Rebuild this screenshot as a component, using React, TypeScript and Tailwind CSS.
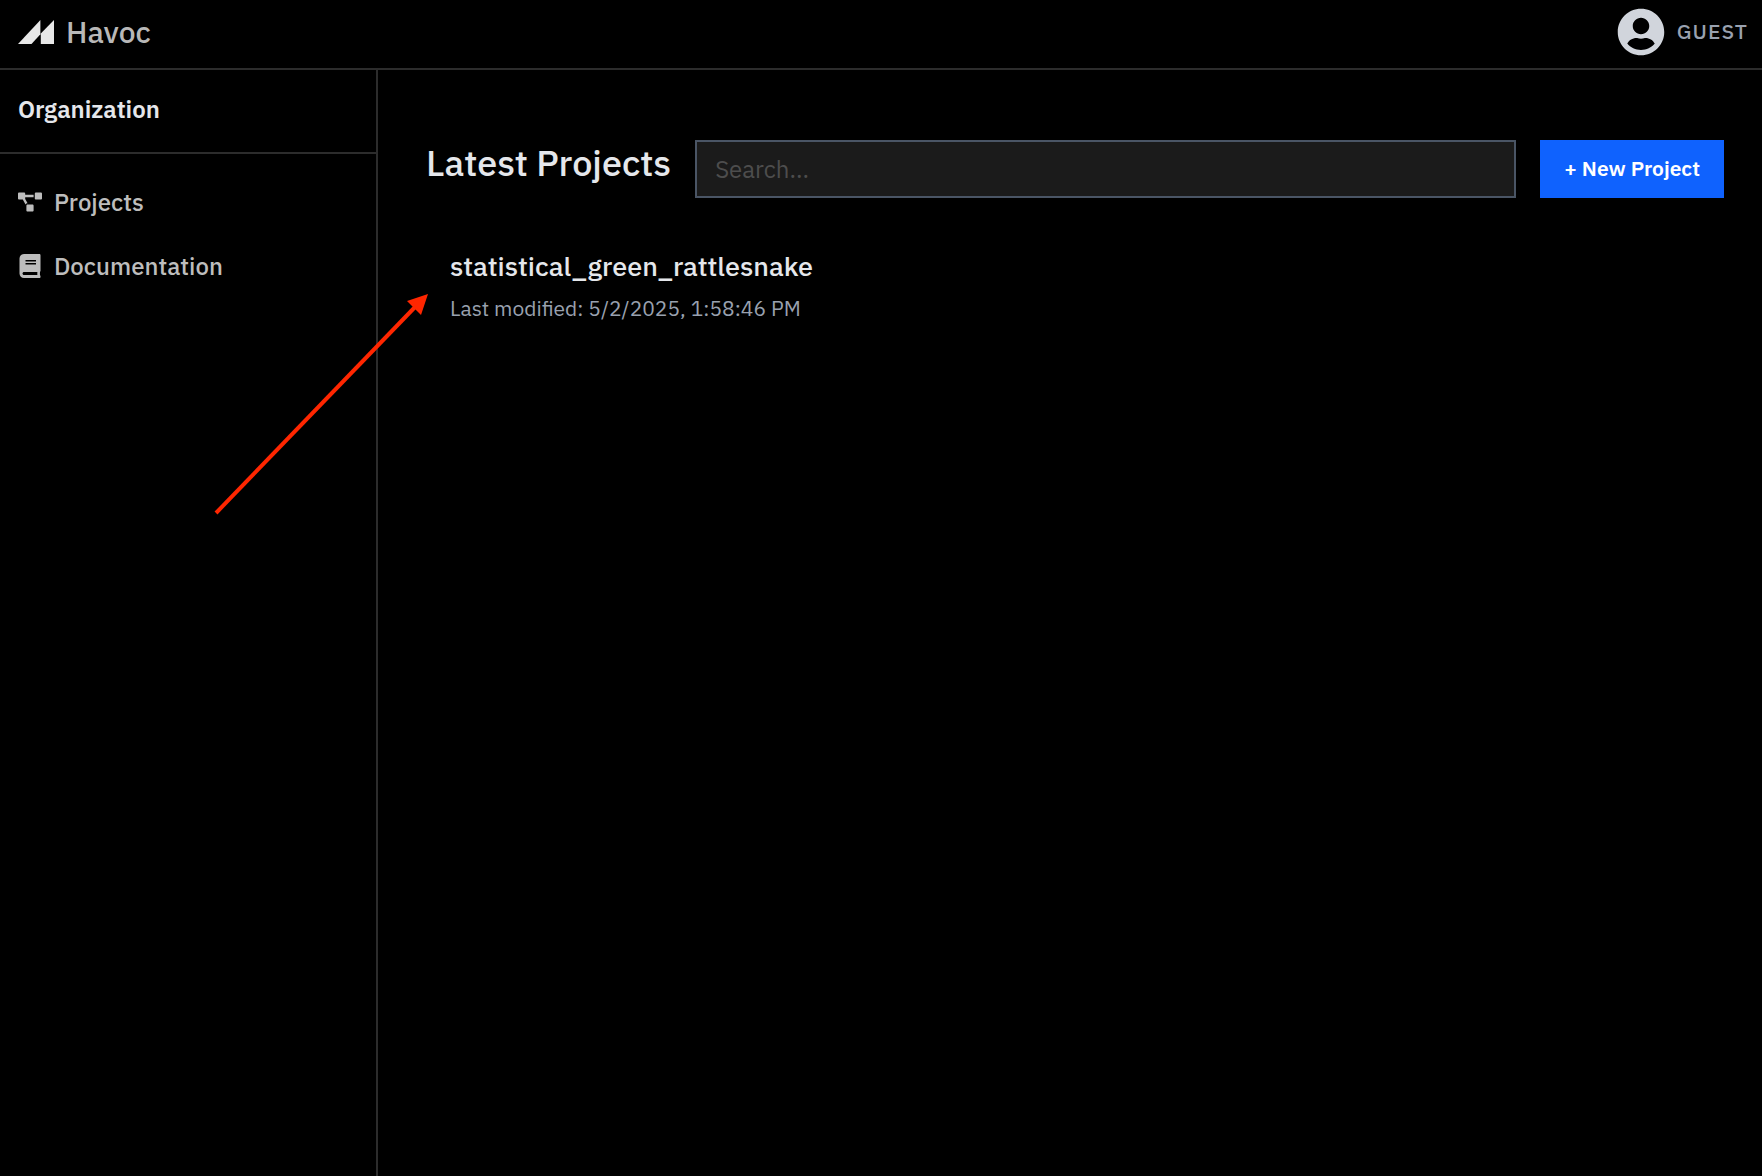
import { FaBook, FaProjectDiagram, FaUserCircle } from 'react-icons/fa';

const navItems = [
  { label: 'Projects', icon: FaProjectDiagram },
  { label: 'Documentation', icon: FaBook },
];

const projects = [
  { name: 'statistical_green_rattlesnake', modified: '5/2/2025, 1:58:46 PM' },
];

function Logo() {
  return (
    <svg viewBox="0 0 36 24" className="h-6 w-9" fill="#e8e8e8" aria-hidden="true">
      <path d="M0 24 22.4 0V14.2L13.5 24Z" />
      <path d="M22.8 13.6 36 0V24H22.8Z" />
    </svg>
  );
}

function Header() {
  return (
    <header className="flex h-[70px] items-center justify-between border-b-2 border-[#2c2c2c] pr-3.5 pb-1 pl-[18px]">
      <a href="#" className="flex items-center gap-3 text-[30px] leading-9 font-medium text-[#b8b8b8]">
        <Logo />
        Havoc
      </a>
      <button type="button" className="flex items-center gap-3 text-[21px] font-medium tracking-wider text-gray-400">
        <FaUserCircle className="size-12 text-gray-300" />
        GUEST
      </button>
    </header>
  );
}

function Sidebar() {
  return (
    <aside className="w-[378px] shrink-0 border-r-2 border-[#2c2c2c]">
      <h2 className="flex h-[84px] items-center border-b-2 border-[#2c2c2c] px-[18px] pb-1 text-2xl font-semibold text-gray-200">
        Organization
      </h2>
      <nav className="flex flex-col gap-7 px-[18px] py-[30px]">
        {navItems.map(({ label, icon: Icon }) => (
          <a key={label} href="#" className="flex items-center gap-3 text-2xl leading-9 font-medium text-[#bdbdbd]">
            <Icon className="size-6" />
            {label}
          </a>
        ))}
      </nav>
    </aside>
  );
}

function Arrow() {
  return (
    <svg
      viewBox="0 0 216 224"
      className="pointer-events-none absolute top-[292px] left-[214px] h-56 w-[216px]"
      fill="#ff2600"
      aria-hidden="true"
    >
      <path d="M2 221 203 13" stroke="#ff2600" strokeWidth="4" />
      <path d="M214 2 207 23 193 9Z" />
    </svg>
  );
}

export default function App() {
  return (
    <div className="relative flex min-h-screen flex-col bg-black font-['IBM_Plex_Sans','Noto_Sans',sans-serif]">
      <Header />
      <div className="flex flex-1">
        <Sidebar />
        <main className="flex-1 py-[70px] pr-[38px] pl-12">
          <div className="flex gap-6">
            <h1 className="text-4xl leading-[46px] font-medium whitespace-nowrap text-gray-200">Latest Projects</h1>
            <input
              type="search"
              aria-label="Search projects"
              placeholder="Search..."
              className="h-[58px] min-w-0 flex-1 border-2 border-gray-600 bg-[#1b1b1b] px-[18px] text-2xl text-gray-200 placeholder:text-[#4d4d4d]"
            />
            <button type="button" className="h-[58px] shrink-0 bg-[#0f62fe] px-6 text-[21px] font-semibold text-white">
              + New Project
            </button>
          </div>
          <ul className="mt-[50px] px-6">
            {projects.map((project) => (
              <li key={project.name}>
                <a href="#" className="text-[27px] leading-9 font-medium text-gray-200">
                  {project.name}
                </a>
                <p className="mt-2 text-[21px] leading-8 text-gray-400">Last modified: {project.modified}</p>
              </li>
            ))}
          </ul>
        </main>
      </div>
      <Arrow />
    </div>
  );
}
